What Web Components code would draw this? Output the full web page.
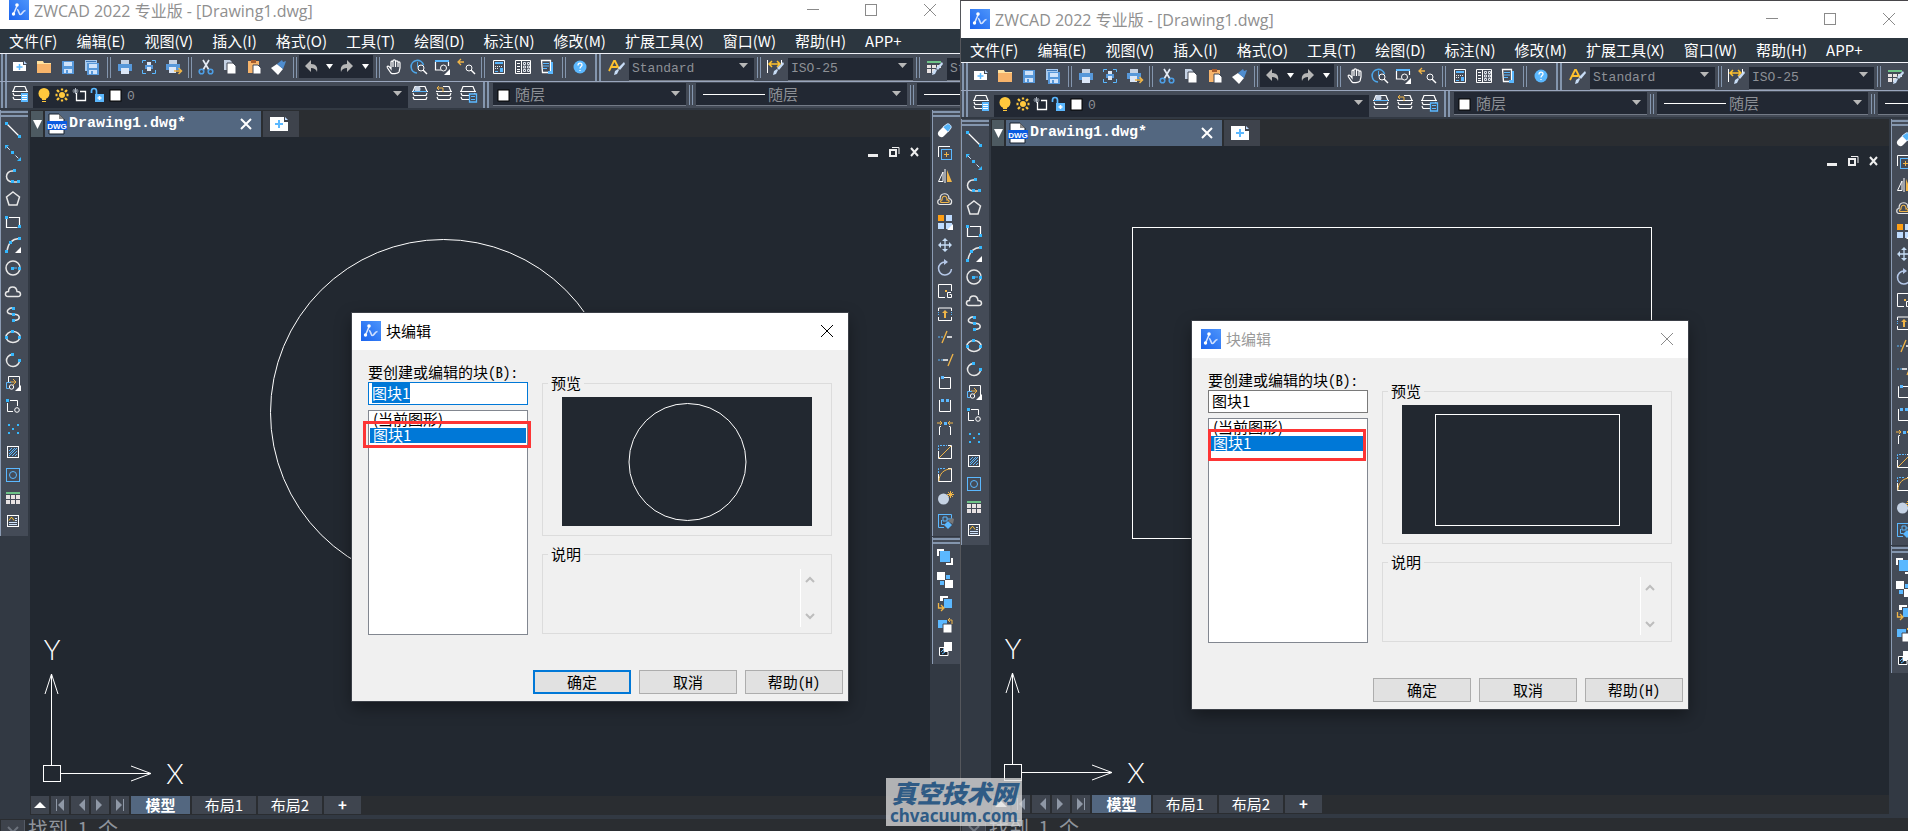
<!DOCTYPE html>
<html lang="zh-CN">
<head>
<meta charset="utf-8">
<title>ZWCAD 2022</title>
<style>
html, body { margin: 0; height: 100%; overflow: hidden; background: #222830; }
body { font-family: "Noto Sans CJK SC", sans-serif; font-size: 15px; }
main { position: relative; display: grid; grid-template-columns: 960fr 948fr; height: 100vh; }
.pane { min-width: 0; overflow: hidden; display: grid; box-sizing: border-box; }
.pane.right { border-left: 1px solid #55575c; border-top: 1px solid #48464a; }
.pane.right cad-window { width: calc(100% + 11px); --title-h: 37px; --cmd-h: 13px; }
block-dialog { position: absolute; }
#dlg-a { left: 352px; top: 313px; }
#dlg-b { left: 231px; top: 320px; }
cad-watermark { position: absolute; left: 886px; top: 778px; }
</style>
</head>
<body>
<main>
  <div class="pane">
    <cad-window heading="ZWCAD 2022 专业版 - [Drawing1.dwg]">
      <svg slot="drawing" width="900" height="650" fill="none" stroke="#fff"><circle cx="413.5" cy="275.5" r="173"/></svg>
      <block-dialog id="dlg-a" active name="图块1">
        <svg slot="preview" width="250" height="129" fill="none" stroke="#fff"><circle cx="125.5" cy="65" r="58.5"/></svg>
      </block-dialog>
    </cad-window>
  </div>
  <div class="pane right">
    <cad-window heading="ZWCAD 2022 专业版 - [Drawing1.dwg]">
      <svg slot="drawing" width="900" height="650" fill="none" stroke="#fff"><rect x="141.5" y="81.5" width="519" height="311"/></svg>
      <block-dialog id="dlg-b" name="图块1">
        <svg slot="preview" width="250" height="129" fill="none" stroke="#fff"><rect x="33.5" y="9.5" width="184" height="111"/></svg>
      </block-dialog>
    </cad-window>
  </div>
  <cad-watermark></cad-watermark>
</main>

<script>
const sq = (x, y, c = '#35b8ff') => `<rect x="${x - 1}" y="${y - 1}" width="3" height="3" fill="${c}"/>`;
const B = '#5bb8ff', Y = '#f0b548', L = '#bfdcff';
const corner = `<path d="M18 12v6h-6z" fill="#fff"/>`;
const lens = `<circle cx="13" cy="11" r="3" fill="#444b57" stroke="#fff"/><path d="M15 13l4 4" stroke="#fff" stroke-width="1.500"/>`;
const brush = `<path d="M8 18l1-4 3-2 1 1-2 4z" fill="#c7dcf5"/><path d="M12 11l6-6 1 2-5 6z" fill="#c7dcf5"/>`;
const stack = `<g fill="none" stroke="#fff" stroke-width="1.200"><path d="M3 7.500l2-5h10l2 5zM2 7.500h16M4 11.500h12l1-2.500M4 11.500L3 9M4 15.500h12l1-2.500M4 15.500L3 13"/></g>`;
const ICONS = {
  new: `<path d="M3 5h10v3h3v6H3z" fill="#fff"/><path d="M14 4l3 3h-3z" fill="${L}"/><path d="M9.500 7v6M6.500 10h6" stroke="${B}" stroke-width="1.500"/>`,
  open: `<path d="M3 4h6l1 2h7v3H3z" fill="#ffe2a0"/><path d="M3 7h14v9H3z" fill="#f7b46b"/>`,
  save: `<path d="M4 4h12v13H4z" fill="#5798da"/><path d="M6 5h8v4H6zM6 12h8v4H6z" fill="#cfe3fb"/><path d="M8 13h2v3H8z" fill="#5798da"/>`,
  saveall: `<path d="M3 3h12v11H3z" fill="#a6c9ef"/><path d="M4 4h10v1H4z" fill="#3f78b8"/><path d="M5 6h12v12H5z" fill="#5798da"/><path d="M7 7h8v4H7zM7 13h8v4H7z" fill="#cfe3fb"/><path d="M9 14h2v3H9z" fill="#5798da"/>`,
  print: `<path d="M6 3h8v5H6z" fill="#c5d2e4"/><path d="M3 7h14v7H3z" fill="#5798da"/><path d="M6 11h8v6H6z" fill="#dce7f7"/>`,
  preview: `<path d="M3.500 6V3.500H7M13 3.500h3.500V6M16.500 13v3.500H13M7 16.500H3.500V13" fill="none" stroke="${B}"/><path d="M8 5h4v3H8z" fill="#dce7f7"/><path d="M6 8h8v4H6z" fill="#5798da"/><path d="M8 10h4v4H8z" fill="#dce7f7"/>`,
  plot: `<path d="M6 3h8v5H6z" fill="#c5d2e4"/><path d="M3 7h14v6H3z" fill="#5798da"/><path d="M6 10h7v6H6z" fill="#dce7f7"/><path d="M11 14h7M15.500 11l3 3-3 3" fill="none" stroke="${Y}" stroke-width="1.500"/>`,
  cut: `<path d="M7 3l6 10M13 3L7 13" stroke="#e4ebf5" stroke-width="1.700"/><circle cx="5.500" cy="14.500" r="2.300" fill="none" stroke="#4d9fe6" stroke-width="1.600"/><circle cx="14.500" cy="14.500" r="2.300" fill="none" stroke="#4d9fe6" stroke-width="1.600"/>`,
  copy: `<path d="M4 3h6l2 2v8H4z" fill="#c5d2e4"/><path d="M7 6h6l3 3v8H7z" fill="#fff" stroke="#444b57"/>`,
  paste: `<path d="M4 4h11v12H4z" fill="#f7b46b"/><path d="M7 3h5v3H7z" fill="#a85c2c"/><path d="M9 8h5l3 3v6H9z" fill="#fff" stroke="#444b57"/>`,
  match: `<path d="M3 11l6-4 6 5-5 6z" fill="#fff"/><path d="M9 7l5-4 1 2 3-1-1 3-2 5z" fill="#4f8dcf"/>`,
  undo: `<path d="M4 9l6-6v4c5 0 7 3 6 8-1-3-3-4-6-4v4z" fill="#b6b6b6"/>`,
  redo: `<path d="M16 9l-6-6v4c-5 0-7 3-6 8 1-3 3-4 6-4v4z" fill="#b6b6b6"/>`,
  pan: `<path d="M7 12L5 9.500c-1-1-2.500 0-1.500 1.500L7 16c1 1 7 1 8-1l1-4V6c0-1.500-2-1.500-2 0V5c0-1.500-2.500-1.500-2.500 0V4c0-1.500-2.500-1.500-2.500 0v1c-.5-1.500-2-1-2 0zM9 5v5M11.500 5v5M14 6v4" fill="none" stroke="#fff" stroke-width="1.200"/>`,
  zoom: `<path d="M15.500 8a6.300 6.300 0 1 0-6.500 8" fill="none" stroke="#4da6e8" stroke-width="1.600"/><path d="M9.500 5v5h2" stroke="#4da6e8" fill="none"/>${lens}`,
  zoomwin: `<path d="M3 4h14" stroke="${B}" stroke-width="2"/><path d="M3.500 5v8H9M16.500 5v4" fill="none" stroke="#fff" stroke-width="1.200"/><circle cx="11.500" cy="11" r="3" fill="#444b57" stroke="#fff"/>${corner}`,
  zoomprev: `<path d="M2 5h6M5 2L2 5l3 3" fill="none" stroke="${Y}" stroke-width="1.300"/>${lens}`,
  props: `<path d="M4.500 3.500h11v13h-11z" fill="none" stroke="#fff"/><path d="M6 5h8v2H6z" fill="${B}"/><path d="M6 9.500h8M6 11.500h3" stroke="#e8e8e8" stroke-dasharray="1 1"/><path d="M6 14h3v1H6zM11 11h3v4h-3z" fill="${B}"/>`,
  palette: `<path d="M2.500 3.500h15v13h-15zM8.500 3v14M4 6.500h3M4 9.500h3M4 12.500h3M4 14.500h3" fill="none" stroke="#fff"/><path d="M10.500 5.500h2v2h-2zM14.500 5.500h2v2h-2zM10.500 9h2v2h-2zM14.500 9h2v2h-2zM10.500 12.500h2v2h-2zM14.500 12.500h2v2h-2z" fill="none" stroke="#dfe3ea"/>`,
  sheet: `<path d="M4.500 3.500h9v12h-8z" fill="none" stroke="#fff" stroke-width="1.300"/><path d="M6 6.500h6M6 9h6M6 11.500h4" stroke="${B}"/><path d="M14 5h2v12h-5v-3h3z" fill="${B}"/>`,
  help: `<circle cx="10" cy="10" r="6.500" fill="${B}"/><path d="M8 8.500c0-3 4-3 4-.5 0 1.500-2 1.500-2 3.500M10 13v1" fill="none" stroke="#fff" stroke-width="1.300"/>`,
  textstyle: `<path d="M3 14L8 4h1l4 8M5 10h6" fill="none" stroke="#ffc22e" stroke-width="1.800"/>${brush}`,
  dimstyle: `<path d="M2.500 3v13M16.500 3v6" stroke="#fff"/><path d="M4 7h11M7 4L4 7l3 3M12 4l3 3-3 3" fill="none" stroke="#ffc22e" stroke-width="1.500"/>${brush}`,
  tablestyle: `<path d="M3 4h14v2H3z" fill="#6dc287"/><path d="M3 8h4v3H3zM8 8h4v3H8zM13 8h4v3h-4zM3 12h4v4H3zM8 12h3v4H8z" fill="#e8e2e2"/>${brush}`,
  layers: `${stack}<path d="M11 9h7v9h-7z" fill="${B}"/><path d="M12 11.500h5M12 13.500h5M12 15.500h5" stroke="#fff"/>`,
  laycur: `${stack}<circle cx="7.500" cy="5" r="3" fill="#c5d2e4"/><path d="M3 7.500h14" stroke="${B}"/>`,
  layprev: `${stack}<path d="M3 1h6v6H3z" fill="#444b57"/><path d="M9 8V4H3M5 2L3 4l2 2" fill="none" stroke="${Y}"/>`,
  laystate: `${stack}<path d="M11.500 10h7v8h-7z" fill="#444b57" stroke="${B}" stroke-width="1.300"/><path d="M13 12.500h4M13 15.500h4" stroke="${B}"/>`,
  bulb: `<circle cx="10" cy="8.500" r="5.500" fill="#ffc83d"/><path d="M8 12h4v3H8zM8 16h4v1H8z" fill="#ffc83d"/>`,
  sun: `<circle cx="10" cy="10" r="3" fill="#ffc83d"/><path d="M10 3.500v2M10 14.500v2M3.500 10h2M14.500 10h2M5 5l2 2M13 13l2 2M15 5l-2 2M7 13l-2 2" stroke="#ffc83d" stroke-width="2.300"/>`,
  freeze: `<path d="M6.500 8v7.500h9v-9H10" fill="none" stroke="#fff" stroke-width="1.300"/><path d="M5.500 3v6M2.500 6h6M3.500 4l4 4M7.500 4l-4 4" stroke="#aab2bd"/>`,
  unlock: `<path d="M3.500 8V6a2.500 2.500 0 0 1 5 0v3" fill="none" stroke="${B}" stroke-width="1.700"/><path d="M7 9h9v8H7z" fill="${B}"/><path d="M11.500 11v4M9.500 13h4" stroke="#fff" stroke-width="1.600"/>`,
  swatch: `<rect x="4" y="5" width="11" height="11" fill="#fff" stroke="#000"/>`,

  line: `<path d="M4 4l12 12" stroke="#fff" stroke-width="1.200"/>${sq(3,3)}${sq(16,16)}`,
  xline: `<path d="M4 4l12 12" stroke="#cfe3fb" stroke-dasharray="4 2"/><path d="M2 2h4L2 6zM18 18h-4l4-4z" fill="#35b8ff"/>${sq(9,9)}`,
  pline: `<path d="M11 5h-2a5 5 0 0 0 0 11h7" fill="none" stroke="#e8e8e8" stroke-width="1.500"/>${sq(11,4)}${sq(9,15)}${sq(15,15)}`,
  polygon: `<path d="M10 3l6.500 5L14 16H6L3.500 8z" fill="none" stroke="#e8e8e8" stroke-width="1.500"/>`,
  rect: `<path d="M6 5.500h10.500V14M3.500 7v8.500h11" fill="none" stroke="#fff" stroke-width="1.200"/>${sq(3,5)}${sq(16,14)}`,
  arc: `<path d="M4 16C5 9 9 4 16 3.500" fill="none" stroke="#e8e8e8" stroke-width="1.500"/>${sq(3,16)}${sq(7,7)}${sq(16,3)}${corner}`,
  circle: `<circle cx="10" cy="10" r="7" fill="none" stroke="#e8e8e8" stroke-width="1.500"/><path d="M11 10h3" stroke="${B}"/>${sq(9,10)}${sq(16,10)}`,
  cloud: `<path d="M5 15.500c-3.500 0-3.500-5 .5-5 0-6 8-6 8.500 0 4.500 0 4.500 5 1 5z" fill="none" stroke="#e8e8e8" stroke-width="1.500"/>`,
  spline: `<path d="M11 4C6 3 2 8 6 9.500s9 0 10 3-2 4-6 4" fill="none" stroke="#e8e8e8" stroke-width="1.500"/>${sq(10,4)}${sq(10,16)}${sq(10,10)}`,
  ellipse: `<ellipse cx="10" cy="10" rx="7" ry="5.500" fill="none" stroke="#e8e8e8" stroke-width="1.500"/>${sq(3,10)}${sq(9,4)}${sq(16,10)}`,
  earc: `<path d="M9 4.500a6.500 6 0 1 0 7.500 6" fill="none" stroke="#e8e8e8" stroke-width="1.500"/>${sq(9,4)}${sq(16,10)}`,
  insert: `<path d="M5.500 9V3.500h11V15" fill="none" stroke="#fff"/><path d="M7 9h5M10 6l3 3-3 3" fill="none" stroke="${Y}"/><path d="M8 9.500H3.500v6H6" fill="none" stroke="${B}"/><circle cx="8.500" cy="14" r="2.200" fill="none" stroke="#fff"/>${corner}`,
  block: `<path d="M7 4.500h7.500V10M4.500 7v8.500H10" fill="none" stroke="#fff"/>${sq(4,4)}<circle cx="14" cy="14" r="2.300" fill="none" stroke="#fff"/>`,
  point: [[5,6],[14,6],[9,10],[5,14],[14,14]].map(p => `<rect x="${p[0]}" y="${p[1]-1}" width="2" height="2" fill="#35b8ff"/>`).join(''),
  hatch: `<rect x="4.500" y="4.500" width="11" height="11" fill="none" stroke="#fff"/><path d="M6 9l3-3M6 12l6-6M6 14l8-8M9 14l5-5M12 14l2-2" stroke="${B}"/>`,
  region: `<rect x="3.500" y="3.500" width="13" height="13" fill="none" stroke="${B}"/><circle cx="10" cy="10" r="3.500" fill="none" stroke="${B}"/>`,
  table: `<path d="M3 4h14v2H3z" fill="#6dc287"/><path d="M3 7h4v4H3zM8 7h4v4H8zM13 7h4v4h-4zM3 12h4v4H3zM8 12h4v4H8zM13 12h4v4h-4z" fill="#e8e2e2"/>`,
  mtext: `<rect x="4.500" y="4.500" width="11" height="11" fill="none" stroke="#fff"/><path d="M6 9.500l2-3h1l2 3" fill="none" stroke="#ffc22e"/><path d="M12 7.500h2M12 9.500h2M6 11.500h8M6 13.500h8" stroke="#cfe3fb"/>`,

  erase: `<path d="M4 16c-2-2-1-4 0-5l4-4 5 5-4 4c-2 2-4 1-5 0z" fill="#fff"/><path d="M8 7l4-3c2-1 5 2 4 4l-3 4z" fill="#54b4f9" stroke="#cfe3fb"/>`,
  dup: `<path d="M3.500 14V3.500H15" fill="none" stroke="#fff"/><rect x="6.500" y="6.500" width="10" height="10" fill="none" stroke="${B}"/><path d="M11.500 9v5M9 11.500h5" stroke="${Y}"/>`,
  mirror: `<path d="M3.500 15.500H8V6z" fill="none" stroke="#fff"/><path d="M10 3v14" stroke="#fff"/><path d="M12 16h5L12 4z" fill="${Y}"/>`,
  offset: `<path d="M5 15.500c-3 0-3-5 0-5 0-8 9-7 9-1 4 1 3 6 0 6z" fill="none" stroke="#e8e8e8" stroke-width="1.200"/><path d="M7 13.500h6c2 0 1-3-1-2.500 0-5-5-5-5 0-1 0-2 2-1 2.500z" fill="none" stroke="${Y}" stroke-width="1.200"/>`,
  array: `<path d="M3 3h6v6H3z" fill="#ff9f14"/><path d="M11 3h6v6h-6zM3 11h6v6H3zM11 11h6v6h-6z" fill="${L}"/>${corner}`,
  move: `<path d="M10 4v12M4 10h12" stroke="#c5dcf5" stroke-width="1.300"/><path d="M10 3l3 3H7zM10 17l3-3H7zM3 10l3-3v6zM17 10l-3-3v6z" fill="#c5dcf5"/>`,
  rotate: `<path d="M10 4a6.500 6.500 0 1 0 6.500 7" fill="none" stroke="#b5c8e8" stroke-width="1.500"/><path d="M9 1l4 3-4 3z" fill="#b5c8e8"/>`,
  scale: `<path d="M10 16.500H3.500v-13h13V10" fill="none" stroke="#fff"/><path d="M10 9h2v2h-2z" fill="${Y}"/><path d="M16 11.500h-3.500v5h4v-3h-2" fill="none" stroke="#fff"/>`,
  stretch: `<path d="M3.500 7V4h13v3M3.500 13v3.500h13V13" fill="none" stroke="#fff"/><path d="M3.500 8v4M16.500 8v4" stroke="${B}" stroke-dasharray="1 1"/><path d="M10 6l3 3h-2v5H9V9H7z" fill="${Y}"/>`,
  trim: `<path d="M3 10h5" stroke="${B}" stroke-dasharray="2 1"/><path d="M12 10h5" stroke="#fff" stroke-width="1.500"/><path d="M12 4L7 16" stroke="${Y}" stroke-width="1.300"/>`,
  extend: `<path d="M3 10h5" stroke="${B}" stroke-dasharray="2 1"/><path d="M8 10h5" stroke="#fff" stroke-width="1.500"/><path d="M18 4l-5 12" stroke="${Y}" stroke-width="1.300"/>`,
  break1: `<path d="M5 4.500h-.5v11h11v-11H9" fill="none" stroke="#fff"/>${sq(7,4,B)}`,
  break2: `<path d="M4.500 4v11.500h11V4" fill="none" stroke="#fff"/>${sq(7,4,B)}${sq(12,4,B)}`,
  join: `<path d="M4.500 16V7.500M15.500 16V7.500M5 7.500h1M14 7.500h1" fill="none" stroke="#fff"/><path d="M2 4h5M5 2l2 2-2 2M18 4h-5M15 2l-2 2 2 2" fill="none" stroke="${Y}"/>${sq(10,4,B)}`,
  chamfer: `<path d="M3.500 9v7.500h13v-13H13" fill="none" stroke="#fff"/><path d="M3.500 8V3.500H12" fill="none" stroke="${B}" stroke-dasharray="2 1"/><path d="M4 16L16 4" stroke="${Y}"/>`,
  fillet: `<path d="M3.500 9v7.500h13v-13H13" fill="none" stroke="#fff"/><path d="M3.500 8V3.500H10" fill="none" stroke="${B}" stroke-dasharray="2 1"/><path d="M4 16C4 9 9 4 16 4" fill="none" stroke="${Y}"/>`,
  explode: `<circle cx="8.500" cy="11" r="5.500" fill="#c5d2e4"/><path d="M15.500 3v7M12 6.500h7M13 4l5 5M18 4l-5 5" stroke="${Y}"/>`,
  bedit: `<path d="M3.500 3.500h13V8M3.500 3v13.500H9M6.500 9v4.500h3M8 6h4v4H8zM12 8h4" fill="none" stroke="${B}"/><path d="M9 14l4-4 4 4-4 4z" fill="${B}"/><path d="M13 10l4-3 2 1-1 5z" fill="#777"/>`,
  front: `<path d="M2 9V2h7v2H4v5zM11 16h5v-5h2v7h-7z" fill="#fff"/><path d="M5 4h10v11H5z" fill="${B}"/>`,
  back: `<path d="M2 2h8v8H2zM10 10h8v8h-8z" fill="#fff"/><path d="M11 5h4v4h-4zM5 11h4v4H5z" fill="${B}"/>`,
  above: `<path d="M5 8V3h8v2H8v3z" fill="#fff"/><path d="M9 6h8v9H9z" fill="${B}"/><path d="M3.500 10v5H8M6 12l3 3-3 3" fill="none" stroke="${Y}" stroke-width="1.300"/>`,
  under: `<path d="M3 4h9v8H3z" fill="${B}"/><path d="M8 8h9v9H8z" fill="#fff" stroke="#444b57"/><path d="M17 8V4h-3M15 2l-2 2 2 2" fill="none" stroke="${Y}"/>`,
  hatchback: `<path d="M9 3h8v9H9z" fill="#fff"/><path d="M4.500 8.500H9v4h4v4H4.500z" fill="#222830" stroke="#fff"/><path d="M6 13l3-3M7 15l3-2" stroke="${B}"/>`
};
const svg = name => `<svg width="20" height="20" viewBox="0 0 20 20" aria-hidden="true">${ICONS[name]}</svg>`;
const LOGO = `<svg width="20" height="20" viewBox="0 0 20 20" aria-hidden="true"><defs><linearGradient id="g" x1="0" y1="1" x2="1" y2="0"><stop offset="0" stop-color="#1a63ee"/><stop offset="1" stop-color="#4d95fb"/></linearGradient></defs><rect width="20" height="20" fill="url(#g)"/><path d="M4.500 14L8 6" stroke="#dce8ff" stroke-width="1.500"/><circle cx="8" cy="5" r="1.800" fill="#fff"/><circle cx="4.500" cy="14" r="1.700" fill="#fff"/><path d="M8 9.500c2 0 1.500 5 3.500 5s2-4 5-4" fill="none" stroke="#cfe0ff" stroke-width="1.700"/></svg>`;
const BASE = `*{box-sizing:border-box} button{font:inherit;color:inherit;background:none;border:0;padding:0;margin:0}`;

class Base extends HTMLElement {
  connectedCallback() {
    if (this.shadowRoot) return;
    this.attachShadow({ mode: 'open' }).innerHTML = `<style>${BASE}${this.css()}</style>${this.html()}`;
    this.ready();
  }
  css() { return ''; }
  html() { return '<slot></slot>'; }
  ready() {}
}

/* One square button with an icon */
customElements.define('tool-button', class extends Base {
  css() { return `:host{display:block;flex:none;width:24px;height:23px} button{display:grid;place-items:center;width:100%;height:100%} svg{display:block}`; }
  html() { const i = this.getAttribute('icon'); return `<button type="button" aria-label="${i}">${svg(i)}</button>`; }
});

/* Thin divider, or the wide handle at the start of a bar */
customElements.define('bar-grip', class extends Base {
  css() { return `:host{display:flex;flex:none;width:9px;align-self:stretch;justify-content:center;gap:2px;padding:3px 0 1px} i{width:1px;background:#8496ae}
    :host([wide]){gap:2px;padding:0;width:8px} :host([wide]) i{width:2px} :host([space]){width:12px}
    :host([across]){width:auto;height:8px;flex-direction:column;justify-content:flex-start;align-items:stretch;padding:1px 0 0} :host([across]) i{width:auto;height:2px}`; }
  html() { return `<i></i><i></i>`; }
});

/* Dark drop-down on the tool bars */
customElements.define('bar-select', class extends Base {
  css() { return `:host{display:block;position:relative;flex:none;height:23px;margin-left:1px}
    select{appearance:none;width:100%;height:23px;margin:0;border:0;border-radius:0;border-bottom:1px solid #737a86;background:#222833;color:#8d9096;padding:0 4px 0 var(--pad,3px);font:13px/20px "Liberation Mono","Noto Sans CJK SC",monospace}
    :host([cjk]) select{font:15px/20px "Noto Sans CJK SC",sans-serif}
    svg.a{position:absolute;right:6px;top:8px} .pre{position:absolute;left:1px;top:2px;display:flex;pointer-events:none}`; }
  html() { return `<select aria-label="${this.getAttribute('label')}"><option>${this.getAttribute('value') || ''}</option></select><div class="pre"><slot></slot></div><svg class="a" width="9" height="5" aria-hidden="true"><path d="M0 0h9L4.500 5z" fill="#b8b8b8"/></svg>`; }
});

customElements.define('cad-icon', class extends Base {
  css() { return `:host{display:block;width:18px;height:20px} svg{display:block}`; }
  html() { return svg(this.getAttribute('name')); }
});

/* Vertical bar of tools */
customElements.define('tool-column', class extends Base {
  css() { return `:host{display:flex;flex-direction:column;width:28px;background:#444b57;border-left:1px solid #8b9bb3;padding-bottom:4px}`; }
  html() { return `<bar-grip across></bar-grip>` + this.getAttribute('tools').split(' ').map(t => `<tool-button icon="${t}"></tool-button>`).join(''); }
});

customElements.define('cad-menubar', class extends Base {
  css() { return `:host{display:block;background:#2c363f;color:#fff;border-bottom:1px solid #f0f2f8;height:25px}
    nav{display:flex;gap:19px;padding-left:9px} button{white-space:nowrap;line-height:24px;height:24px}`; }
  html() { return `<nav>${'文件(F) 编辑(E) 视图(V) 插入(I) 格式(O) 工具(T) 绘图(D) 标注(N) 修改(M) 扩展工具(X) 窗口(W) 帮助(H) APP+'.split(' ').map(t => `<button type="button">${t}</button>`).join('')}</nav>`; }
});

/* Standard bar and layer bar */
customElements.define('cad-toolbars', class extends Base {
  css() { return `:host{display:block;background:#444b57;overflow:hidden;border-bottom:2px solid #323943}
    .row{display:flex;height:27px;align-items:center;padding-bottom:2px} .row+.row{border-top:1px solid #9aa6bd;height:28px;padding-bottom:3px}
    .row bar-grip[wide]{height:27px;align-self:flex-start}
    .hist{display:flex;align-items:center;background:#222833;height:23px;flex:none;padding-right:2px} .hist button{width:12px;height:23px;display:grid;place-items:center}
    .std bar-select{width:125px} .layer{width:375px;--pad:94px}
    .color{width:193px;--pad:22px} .ltype{width:211px;--pad:72px} .lw{width:211px}`; }
  html() {
    const b = s => s.split(' ').map(t => t === '|' ? '<bar-grip></bar-grip>' : `<tool-button icon="${t}"></tool-button>`).join('');
    const down = `<button type="button" aria-label="history"><svg width="7" height="5"><path d="M0 0h7L3.500 5z" fill="#fff"/></svg></button>`;
    const rule = `<svg width="70" height="20" aria-hidden="true"><path d="M6 9.500h62" stroke="#fff"/></svg>`;
    return `<div class="row std"><bar-grip wide></bar-grip>${b('new open save saveall | print preview plot | cut copy paste match |')}
      <div class="hist">${b('undo')}${down}${b('redo')}${down}</div>${b('| pan zoom zoomwin zoomprev | props palette sheet | help')}
      <bar-grip wide space></bar-grip>${b('textstyle')}<bar-select label="文字样式" value="Standard"></bar-select>${b('| dimstyle')}<bar-select label="标注样式" value="ISO-25"></bar-select>${b('| tablestyle')}<bar-select label="表格样式" value="Standard"></bar-select></div>
      <div class="row lay"><bar-grip wide></bar-grip>${b('layers')}<bar-select class="layer" label="图层" value="0">${['bulb','sun','freeze','unlock','swatch'].map(i => `<cad-icon name="${i}"></cad-icon>`).join('')}</bar-select>${b('laycur layprev laystate')}
      <bar-grip wide space></bar-grip><bar-select class="color" cjk label="颜色" value="随层"><cad-icon name="swatch"></cad-icon></bar-select><bar-grip></bar-grip><bar-select class="ltype" cjk label="线型" value="随层">${rule}</bar-select><bar-grip></bar-grip><bar-select class="lw" cjk label="线宽">${rule}</bar-select></div>`;
  }
});

customElements.define('ucs-icon', class extends Base {
  css() { return `:host{display:block} svg{display:block} text{font:300 28px Lato,sans-serif;fill:#fff;text-anchor:middle}`; }
  html() { return `<svg width="160" height="160"><g fill="none" stroke="#fff"><rect x="3.500" y="139.500" width="17" height="16"/><path d="M11.500 139V48M5 68l6.500-20L18 68M21 147.500h90M91 140l20 7.500L91 155"/></g><text x="12" y="34">Y</text><text x="135" y="158">X</text></svg>`; }
});

customElements.define('cad-window', class extends Base {
  css() { return `:host{display:grid;position:relative;min-width:0;min-height:0;grid-template-rows:var(--title-h,29px) 25px 56px minmax(0,1fr) 4px var(--cmd-h,12px);background:#323943}
    header{background:#fff;color:#8f8f8f;display:flex;align-items:flex-end;overflow:hidden} header>svg{margin:0 5px 9px 9px;flex:none}
    h1{font:16px/20px "Open Sans","Noto Sans CJK SC",sans-serif;margin:0 auto 8px 0;white-space:nowrap}
    header button{width:58px;height:20px;margin-bottom:9px;display:grid;place-items:center;flex:none} header button:last-child{width:60px}
    .mid{display:grid;grid-template-columns:30px minmax(0,1fr) 28px;min-height:0}
    .r{display:flex;flex-direction:column;gap:1px} .l{align-self:start}
    .doc{display:grid;grid-template-rows:27px minmax(0,1fr) 19px;background:#2a2d31;min-width:0;margin-right:2px}
    .tabs{display:flex;gap:2px;padding:1px 0 0 1px}
    .tabs .more{width:12px;background:#4d5a61;display:grid;place-items:center}
    .tab{width:216px;background:#536780;color:#fff;display:flex;align-items:center;padding:0 9px 0 2px;font:bold 15px/26px "Liberation Mono",monospace}
    .tab span{flex:1;padding-left:2px} .tab button,.tab svg{display:block}
    .plus{width:36px;background:#3e434c;display:grid;align-items:center;justify-items:start} .plus svg{margin-left:7px}
    .view{position:relative;overflow:hidden;background:#222830} ::slotted([slot=drawing]){position:absolute;left:0;top:0}
    ucs-icon{position:absolute;left:10px;bottom:10px}
    .ctl{position:absolute;right:9px;top:9px;display:flex;gap:8px} .ctl svg{display:block}
    .sheets{display:flex;gap:2px;padding-left:1px;color:#fff;height:18px} .sheets button{width:18px;height:18px;background:#3f454f;line-height:16px}
    .sheets button svg{display:block;margin:auto}
    .sheets .n{width:64px} .sheets .on{width:59px;background:#536780;font-weight:bold} .sheets .p{width:37px;font-weight:bold}
    .cmd{background:#2a2d31;display:flex;overflow:hidden;color:#8f949c;font:20px/20px "Noto Sans Mono CJK SC","Liberation Mono","Noto Sans CJK SC",monospace;padding-left:1px}
    .cmd button{width:24px;height:24px;background:#3e434c;border-right:1px solid #555b66;flex:none;display:grid;place-items:center;margin-top:1px} .cmd p{margin:0 0 0 3px;white-space:pre}`; }
  html() {
    const tri = d => `<svg width="14" height="14" aria-hidden="true">${d}</svg>`;
    return `<header>${LOGO}<h1>${this.getAttribute('heading')}</h1>
      <button type="button" aria-label="minimize"><svg width="12" height="12"><path d="M0 5.500h12" stroke="#8a8a8a"/></svg></button>
      <button type="button" aria-label="maximize"><svg width="12" height="12"><rect x=".5" y=".5" width="11" height="11" fill="none" stroke="#8a8a8a"/></svg></button>
      <button type="button" aria-label="close"><svg width="12" height="12"><path d="M0 0l12 12M12 0L0 12" stroke="#8a8a8a"/></svg></button></header>
    <cad-menubar></cad-menubar><cad-toolbars></cad-toolbars>
    <div class="mid"><tool-column class="l" tools="line xline pline polygon rect arc circle cloud spline ellipse earc insert block point hatch region table mtext"></tool-column>
      <div class="doc"><div class="tabs"><button type="button" class="more" aria-label="documents"><svg width="9" height="9"><path d="M0 0h9L4.500 9z" fill="#fff"/></svg></button>
        <div class="tab"><svg width="20" height="22" aria-hidden="true"><path d="M2 1h10l5 5v15H2z" fill="#fff" stroke="#17202c"/><path d="M12 1v5h5z" fill="#8a8a8a"/><rect y="8" width="20" height="9" fill="#0a5be0"/><text x="10" y="16" fill="#fff" font-family="Liberation Sans" font-weight="bold" font-size="8" text-anchor="middle">DWG</text></svg><span>Drawing1.dwg*</span><button type="button" aria-label="close tab"><svg width="12" height="12"><path d="M1 1l10 10M11 1L1 11" stroke="#fff" stroke-width="2"/></svg></button></div>
        <button type="button" class="plus" aria-label="new tab"><svg width="18" height="16"><path d="M0 1h14v5h4v9H0z" fill="#fff"/><path d="M15 1l3 3h-3z" fill="${L}"/><path d="M9 4v8M5 8h8" stroke="${B}" stroke-width="2"/></svg></button></div>
      <div class="view"><slot name="drawing"></slot><ucs-icon></ucs-icon>
        <div class="ctl"><button type="button" aria-label="min"><svg width="13" height="12"><path d="M1 8h10v3H1z" fill="#eee"/></svg></button><button type="button" aria-label="restore"><svg width="13" height="12"><path d="M4 1.500h7V8" fill="none" stroke="#eee"/><rect x="2" y="4" width="6" height="6" fill="none" stroke="#eee" stroke-width="2"/></svg></button><button type="button" aria-label="close"><svg width="12" height="12"><path d="M2 2l7 8M9 2l-7 8" stroke="#eee" stroke-width="2"/></svg></button></div></div>
      <div class="sheets"><button type="button" aria-label="up">${tri('<path d="M1 10h12L7 4z" fill="#fff"/>')}</button><button type="button" aria-label="first">${tri('<path d="M3.500 1v12" stroke="#8f98a6"/><path d="M11 1v12L5 7z" fill="#8f98a6"/>')}</button><button type="button" aria-label="previous">${tri('<path d="M12 1v12L6 7z" fill="#8f98a6"/>')}</button><button type="button" aria-label="next">${tri('<path d="M3 1v12l6-6z" fill="#8f98a6"/>')}</button><button type="button" aria-label="last">${tri('<path d="M10.500 1v12" stroke="#8f98a6"/><path d="M3 1v12l6-6z" fill="#8f98a6"/>')}</button>
        <button type="button" class="on">模型</button><button type="button" class="n">布局1</button><button type="button" class="n">布局2</button><button type="button" class="p">+</button></div></div>
      <div class="r"><tool-column tools="erase dup mirror offset array move rotate scale stretch trim extend break1 break2 join chamfer fillet explode bedit"></tool-column><tool-column tools="front back above under hatchback"></tool-column></div></div>
    <div></div><div class="cmd"><button type="button" aria-label="close command line"><svg width="16" height="16"><path d="M3 3l10 10M13 3L3 13" stroke="#6d737d" stroke-width="2"/></svg></button><p>找到 1 个</p></div><slot></slot>`;
  }
});

customElements.define('group-box', class extends Base {
  css() { return `:host{display:block} fieldset{margin:0;border:1px solid #dcdcdc;padding:0;min-width:0;height:100%;display:block} legend{margin-left:5px;padding:0 3px;line-height:20px;height:20px}`; }
  html() { return `<fieldset><legend>${this.getAttribute('label')}</legend><slot></slot></fieldset>`; }
});

customElements.define('block-dialog', class extends Base {
  css() { return `:host{display:block;width:496px;height:388px;background:#f0f0f0;color:#000;box-shadow:0 0 0 1px #3b3f47,0 6px 16px rgba(0,0,0,.4);font-size:15px}
    header{height:37px;background:#fff;display:flex;align-items:center;padding:0 15px 1px 9px;color:#999} :host([active]) header{color:#000}
    h2{font:15px/20px "Noto Sans CJK SC",sans-serif;margin:0 auto 0 5px} header svg,header button{display:block}
    .body{display:grid;grid-template-columns:160px 290px;column-gap:14px;padding:12px 16px 0}
    label,.btns{font-family:"Noto Sans Mono CJK SC","Liberation Mono","Noto Sans CJK SC",monospace} label{display:block;height:20px;line-height:20px;white-space:nowrap}
    input{display:block;width:100%;height:23px;margin:0;border:1px solid #7a7a7a;border-radius:0;padding:0 3px 3px;font:15px/18px "Noto Sans CJK SC",sans-serif;outline:0;background:#fff;color:#000}
    :host([active]) input{border-color:#0078d7} ::selection{background:#0078d7;color:#fff}
    ul{list-style:none;margin:5px 0 0;padding:1px;height:225px;border:1px solid #828790;background:#fff;position:relative} li{height:15px;line-height:14px;padding-left:3px;white-space:nowrap} li[aria-selected=true]{background:#0078d7;color:#fff}
    li:first-child{height:16px}
    .mark{position:absolute;border:3px solid #fd3535;inset:10px auto auto -1px;width:158px;height:32px} :host([active]) .mark{left:-6px;width:168px;height:27px}
    .pv{height:163px;margin-top:11px} .pic{width:250px;height:129px;background:#222830;margin:4px 0 0 19px}
    .ds{height:90px;margin-top:8px} .sc{display:flex;flex-direction:column;justify-content:space-between;align-items:center;width:18px;height:58px;border-left:1px solid #fff;margin:5px 0 0 257px;padding:7px 0}
    .btns{display:flex;justify-content:flex-end;gap:8px;padding:0 5px;margin-top:35px} .btns button{width:98px;height:24px;border:1px solid #adadad;background:#e1e1e1;line-height:18px} :host([active]) .btns button:first-child{border:2px solid #0078d7}`; }
  html() {
    const n = this.getAttribute('name'), c = this.hasAttribute('active') ? '#000' : '#8a8a8a';
    return `<header>${LOGO}<h2>块编辑</h2><button type="button" aria-label="close"><svg width="12" height="12"><path d="M0 0l12 12M12 0L0 12" stroke="${c}"/></svg></button></header>
    <div class="body"><div><label for="n">要创建或编辑的块(B):</label><input id="n" value="${n}"><ul role="listbox" aria-label="块"><li role="option">(当前图形)</li><li role="option" aria-selected="true">${n}</li><div class="mark"></div></ul></div>
    <div><group-box class="pv" label="预览"><div class="pic"><slot name="preview"></slot></div></group-box><group-box class="ds" label="说明"><div class="sc"><svg width="10" height="7"><path d="M1 6l4-4 4 4" fill="none" stroke="#bdbdbd" stroke-width="2"/></svg><svg width="10" height="7"><path d="M1 1l4 4 4-4" fill="none" stroke="#bdbdbd" stroke-width="2"/></svg></div></group-box></div></div>
    <div class="btns"><button type="button">确定</button><button type="button">取消</button><button type="button">帮助(H)</button></div>`;
  }
  ready() { if (this.hasAttribute('active')) { const i = this.shadowRoot.getElementById('n'); i.focus({ preventScroll: true }); i.select(); } }
});

customElements.define('cad-watermark', class extends Base {
  css() { return `:host{display:block;width:136px;height:48px;background:rgba(222,222,222,.76);color:#2f5b85;text-align:center;white-space:nowrap}
    b{display:block;font:italic 900 25px/28px "Noto Sans CJK SC",sans-serif} span{display:block;font:bold 17px/20px "Noto Sans",sans-serif}`; }
  html() { return `<b>真空技术网</b><span>chvacuum.com</span>`; }
});
</script>
</body>
</html>
